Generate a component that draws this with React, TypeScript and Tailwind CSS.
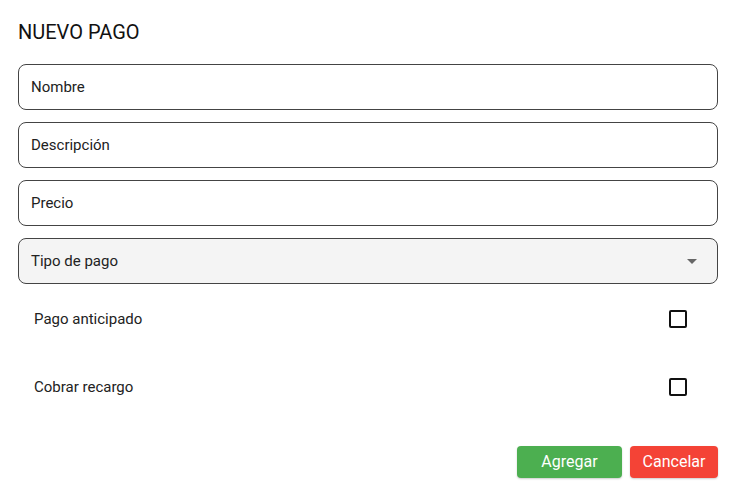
import React from "react";

const fields = ["Nombre", "Descripción", "Precio"];

function Check({ label }: { label: string }) {
  return (
    <label className="flex h-[68px] items-center justify-between pl-4 pr-[31px]">
      <span className="text-[15px] text-[#222]">{label}</span>
      <span className="block h-[18px] w-[18px] rounded-[2px] border-2 border-[#111] bg-white" />
    </label>
  );
}

export default function App() {
  return (
    <div
      className="flex min-h-[488px] w-[737px] flex-col bg-white pl-[18px] pr-[19px] pt-[19px]"
      style={{ fontFamily: "Roboto, 'Liberation Sans', sans-serif" }}
    >
      <h2 className="text-[20px] leading-[26px] text-[#111]">NUEVO PAGO</h2>

      <div className="mt-[19px] flex flex-col gap-3">
        {fields.map((f) => (
          <div
            key={f}
            className="flex h-[46px] items-center rounded-lg border-[1.5px] border-[#444] bg-white px-3 text-[15px] text-[#222]"
          >
            {f}
          </div>
        ))}
        <div className="flex h-[46px] items-center justify-between rounded-lg border-[1.5px] border-[#444] bg-[#f4f4f4] pl-3 pr-5 text-[15px] text-[#222]">
          <span>Tipo de pago</span>
          <svg width="10" height="5" viewBox="0 0 10 5">
            <path d="M0 0h10L5 5z" fill="#666" />
          </svg>
        </div>
      </div>

      <div className="mt-[1px] flex flex-col">
        <Check label="Pago anticipado" />
        <Check label="Cobrar recargo" />
      </div>

      <div className="mt-[25px] flex justify-end gap-2">
        <button className="h-8 w-[105px] rounded bg-[#4caf50] text-[16px] text-white shadow-[0_1px_2px_rgba(0,0,0,0.2)]">
          Agregar
        </button>
        <button className="h-8 w-[88px] rounded bg-[#f44336] text-[16px] text-white shadow-[0_1px_2px_rgba(0,0,0,0.2)]">
          Cancelar
        </button>
      </div>
    </div>
  );
}
